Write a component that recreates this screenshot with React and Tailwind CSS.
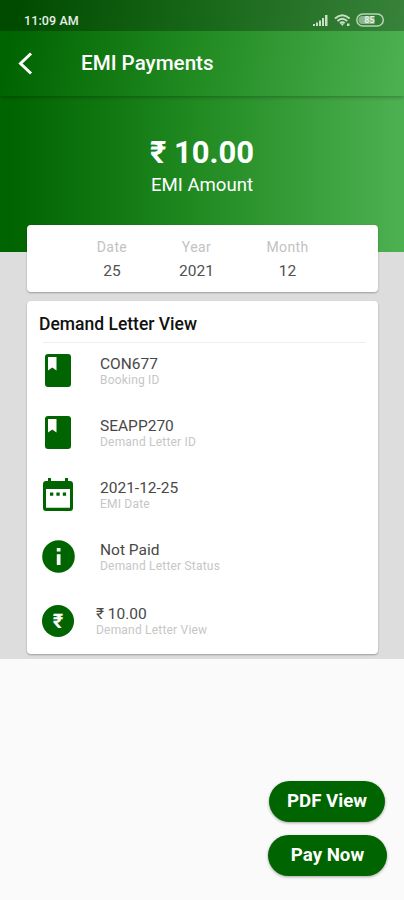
import React from "react";

function BookIcon() {
  return (
    <svg width="26" height="33" viewBox="0 0 26 33" className="ml-[2px]">
      <rect width="26" height="33" rx="3" fill="#006400" />
      <path d="M3 3h8.500v13.500l-4.200-3-4.300 3z" fill="#fff" />
    </svg>
  );
}

function CalendarIcon() {
  return (
    <svg width="30" height="33" viewBox="0 0 30 33">
      <path
        fillRule="evenodd"
        fill="#006400"
        d="M5 0h3v3h14V0h3v3h2a3 3 0 0 1 3 3V30a3 3 0 0 1-3 3H3a3 3 0 0 1-3-3V6a3 3 0 0 1 3-3h2zM3 11V29.700h24V11z"
      />
      <path fill="#006400" d="M7 14.500h3.300v3.300H7zM13.400 14.500h3.300v3.300h-3.300zM19.800 14.500h3.300v3.300h-3.300z" />
    </svg>
  );
}

function InfoIcon() {
  return (
    <svg width="33" height="33" viewBox="0 0 33 33" className="-ml-px">
      <circle cx="16.500" cy="16.500" r="16.300" fill="#006400" />
      <path fill="#fff" d="M14.800 8h3.700v3.500h-3.700zM14.800 14.300h3.700v10.700h-3.700z" />
    </svg>
  );
}

function RupeeIcon() {
  return (
    <div className="-ml-px flex h-8 w-8 items-center justify-center rounded-full bg-[#006400] pb-px text-[20px] font-bold leading-none text-white">
      ₹
    </div>
  );
}

const dates = [
  { label: "Date", value: "25", width: "w-[84px]" },
  { label: "Year", value: "2021", width: "w-[85px]" },
  { label: "Month", value: "12", width: "w-[97px]" },
];

const rows = [
  { icon: <BookIcon />, value: "CON677", label: "Booking ID" },
  { icon: <BookIcon />, value: "SEAPP270", label: "Demand Letter ID" },
  { icon: <CalendarIcon />, value: "2021-12-25", label: "EMI Date" },
  { icon: <InfoIcon />, value: "Not Paid", label: "Demand Letter Status" },
];

function StatusIcons() {
  return (
    <svg width="74" height="16" viewBox="0 0 74 16">
      <g fill="#c9dfc9">
        <path d="M1 12h2v2H1zM4 10.500h2V14H4zM7 8.500h2V14H7zM10 6h2v8h-2zM13 3h2.500v11H13z" />
      </g>
      <g fill="none" stroke="#c9dfc9" strokeWidth="1.900">
        <path d="M23 6.500q7.300-6.500 14.600 0M25.500 9q4.800-4.500 9.600 0M28 11.300q2.300-2 4.600 0" />
      </g>
      <path d="M28.500 11.500h3.600l-1.800 2.500zM35 11.500h2.500V14H35z" fill="#c9dfc9" />
      <rect x="44.800" y="2" width="26.500" height="12" rx="6" fill="none" stroke="#b7d3b7" strokeWidth="1.500" />
      <path d="M50.500 4h12v8h-12a4 4 0 0 1 0-8z" fill="#8db68d" />
      <text x="57.500" y="11.200" textAnchor="middle" fontSize="9" fontWeight="700" fill="#e5f0e5">85</text>
    </svg>
  );
}

export default function App() {
  return (
    <div className="flex h-[900px] w-[404px] flex-col overflow-hidden bg-[#fafafa] font-[Roboto,sans-serif]">
      <header className="z-10 h-24 shrink-0 bg-[linear-gradient(100deg,#006400_4%,#228b22_50%,#4caf50_98%)] text-white shadow-[0_1px_4px_rgba(0,0,0,0.3)]">
        <div className="flex h-[31px] items-start justify-between bg-black/25 pl-6 pr-[18px] pt-[12px]">
          <span className="text-[12.500px] font-medium leading-[17px] tracking-[0.100px] text-[#e6efe6]">11:09 AM</span>
          <StatusIcons />
        </div>
        <div className="flex h-[64px] items-center pl-[18px]">
          <svg width="15" height="23" viewBox="0 0 15 23" fill="none" stroke="#fff" strokeWidth="3">
            <path d="M13 1.500 2.500 11.500 13 21.500" />
          </svg>
          <h1 className="-mt-px ml-[48px] text-[20.600px] font-medium leading-6">EMI Payments</h1>
        </div>
      </header>

      <section className="flex h-[156px] shrink-0 flex-col items-center bg-[linear-gradient(90deg,#006400_3%,#228b22_50%,#4caf50_98%)] pt-[39px] text-white">
        <div className="text-[31px] font-bold leading-9">₹ 10.00</div>
        <div className="mt-[3px] text-[18.600px] leading-[22px]">EMI Amount</div>
      </section>

      <main className="h-[407px] shrink-0 bg-[#dddddd] px-[27px]">
        <div className="relative -mt-[27px] flex h-[67px] w-[351px] rounded-[4px] bg-white pl-[43px] pt-[13px] shadow-[0_1px_2px_rgba(0,0,0,0.3)]">
          {dates.map((d) => (
            <div key={d.label} className={`${d.width} flex flex-col items-center`}>
              <span className="text-[14px] leading-[19px] tracking-[0.400px] text-[#c2c2c2]">{d.label}</span>
              <span className="mt-[4px] text-[15.500px] leading-5 tracking-[0.100px] text-[#505050]">{d.value}</span>
            </div>
          ))}
        </div>

        <div className="mt-[9px] h-[353px] w-[351px] rounded-[4px] bg-white px-3 shadow-[0_1px_2px_rgba(0,0,0,0.3)]">
          <h2 className="pt-[11px] text-[17.500px] font-medium leading-6 text-[#111]">Demand Letter View</h2>
          <div className="ml-1 mt-[6px] border-t border-[#eeeeee]" />
          <div>
            {rows.map((r) => (
              <div key={r.value} className="flex h-[62px] items-start pl-1 pt-[11px]">
                <div className="w-[57px]">{r.icon}</div>
                <div className="pt-px">
                  <div className="text-[15.500px] leading-[18px] text-[#484848]">{r.value}</div>
                  <div className="text-[12px] leading-[14px] tracking-[0.200px] text-[#c6c6c6]">{r.label}</div>
                </div>
              </div>
            ))}
            <div className="flex items-start pl-1 pt-[14px]">
              <div className="w-[53px]"><RupeeIcon /></div>
              <div>
                <div className="text-[15.500px] leading-[18px] text-[#484848]">₹ 10.00</div>
                <div className="text-[12px] leading-[14px] tracking-[0.200px] text-[#c6c6c6]">Demand Letter View</div>
              </div>
            </div>
          </div>
        </div>
      </main>

      <div className="flex flex-1 flex-col items-end pt-[122px] text-[18.700px] font-bold text-white">
        <button className="mr-[19px] h-[41px] w-[116px] rounded-full bg-[#006400] shadow-[0_1px_3px_rgba(0,0,0,0.35)]">PDF View</button>
        <button className="mr-[17px] mt-[13px] h-[41px] w-[119px] rounded-full bg-[#006400] shadow-[0_1px_3px_rgba(0,0,0,0.35)]">Pay Now</button>
      </div>
    </div>
  );
}
